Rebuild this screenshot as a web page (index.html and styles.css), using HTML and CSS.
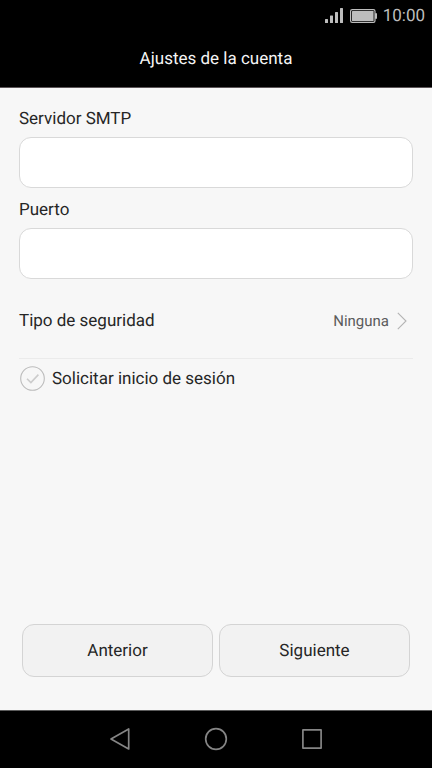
FILE: index.html
```html
<!DOCTYPE html>
<html lang="es">
<head>
    <meta charset="UTF-8">
    <meta name="viewport" content="width=device-width, initial-scale=1.0">
    <title>Ajustes de la cuenta</title>
    <link rel="stylesheet" href="styles.css">
</head>
<body>
    <div class="status-bar">
        <svg class="signal" width="18" height="16" viewBox="0 0 18 16" fill="#bdbdbd">
            <rect x="0" y="11" width="3" height="4" rx="0.5"/>
            <rect x="5" y="7.5" width="3" height="7.5" rx="0.5"/>
            <rect x="10" y="4" width="3" height="11" rx="0.5"/>
            <rect x="15" y="0" width="3" height="15" rx="0.5"/>
        </svg>
        <svg class="battery" width="27" height="14" viewBox="0 0 27 14">
            <rect x="0.6" y="0.6" width="24.4" height="12.8" rx="1.6" fill="none" stroke="#bdbdbd" stroke-width="1.2"/>
            <rect x="2" y="2" width="21.6" height="10" rx="0.5" fill="#bdbdbd"/>
            <rect x="25" y="4" width="2" height="6" rx="1" fill="#bdbdbd"/>
        </svg>
        <span class="clock">10:00</span>
    </div>
    <header class="header">
        <h1>Ajustes de la cuenta</h1>
    </header>

    <form class="settings">
        <div class="field">
            <label for="smtp-server">Servidor SMTP</label>
            <input type="text" id="smtp-server" name="server">
        </div>
        <div class="field">
            <label for="port">Puerto</label>
            <input type="text" id="port" name="port" inputmode="numeric">
        </div>
        <div class="security">
            <label for="security-type">Tipo de seguridad</label>
            <select id="security-type" name="security">
                <option>Ninguna</option>
                <option>SSL/TLS</option>
                <option>STARTTLS</option>
            </select>
            <svg class="chevron" width="10" height="18" viewBox="0 0 10 18" fill="none" stroke="#b4b4b4" stroke-width="1.1">
                <path d="M0.8 0.8 L9 9 L0.8 17.2"/>
            </svg>
        </div>
        <div class="login">
            <span class="check">
                <input type="checkbox" id="login-required" name="login">
                <svg width="25" height="25" viewBox="0 0 25 25" fill="none">
                    <circle cx="12.5" cy="12.5" r="11.8" stroke="#bcbcbc" stroke-width="1.1"/>
                    <path d="M7 12.8 L10.9 16.6 L18.4 8.6" stroke="#cccccc" stroke-width="1.6"/>
                </svg>
            </span>
            <label for="login-required">Solicitar inicio de sesión</label>
        </div>
        <div class="actions">
            <button type="button">Anterior</button>
            <button type="submit">Siguiente</button>
        </div>
    </form>

    <nav class="nav-bar">
        <button type="button" aria-label="Atrás">
            <svg width="24" height="24" viewBox="0 0 24 24" fill="none" stroke="#858585" stroke-width="1.7" stroke-linejoin="round">
                <path d="M20.7 2 V22 L3 12 Z"/>
            </svg>
        </button>
        <button type="button" aria-label="Inicio">
            <svg width="24" height="24" viewBox="0 0 24 24" fill="none" stroke="#858585" stroke-width="1.7">
                <circle cx="12" cy="12" r="10.3"/>
            </svg>
        </button>
        <button type="button" aria-label="Recientes">
            <svg width="24" height="24" viewBox="0 0 24 24" fill="none" stroke="#858585" stroke-width="1.7" stroke-linejoin="round">
                <rect x="2.9" y="2.9" width="18.2" height="18.2"/>
            </svg>
        </button>
    </nav>
</body>
</html>
```

FILE: styles.css
```css
* {
    box-sizing: border-box;
}
body {
    font-family: Roboto, sans-serif;
    font-size: 17px;
    line-height: 20px;
    color: #262626;
    background-color: #f7f7f7;
    text-rendering: geometricPrecision;
    display: flex;
    flex-direction: column;
    min-height: 100vh;
    margin: 0;
}
button, input, select {
    font: inherit;
    color: inherit;
    text-rendering: inherit;
}
.status-bar {
    display: flex;
    align-items: center;
    justify-content: flex-end;
    height: 32px;
    padding: 0 7px;
    background-color: #000;
    color: #bdbdbd;
}
.signal {
    margin-right: 7px;
}
.battery {
    margin-right: 6px;
}
.header {
    padding: 17px 20px 18px;
    background-color: #000;
    border-bottom: 1px solid #5c5558;
}
h1 {
    margin: 0;
    font-size: 17px;
    font-weight: 400;
    text-align: center;
    color: #f5f5f5;
}
.settings {
    flex: 1;
    display: flex;
    flex-direction: column;
    padding: 21px 19px 33px;
}
.field {
    display: flex;
    flex-direction: column;
    gap: 8px;
    margin-bottom: 12px;
}
.field input {
    width: 100%;
    height: 51px;
    padding: 0 14px;
    background-color: #fff;
    border: 1px solid #d9d9d9;
    border-radius: 12px;
}
.security {
    display: flex;
    align-items: center;
    padding: 20px 6px 27px 0;
    border-bottom: 1px solid #ebebeb;
}
.security label {
    flex: 1;
}
.security select {
    appearance: none;
    padding: 0;
    border: none;
    background: none;
    font-size: 15px;
    color: #5c5c5c;
    text-align: right;
    text-align-last: right;
}
.chevron {
    margin-left: 8px;
}
.login {
    display: flex;
    align-items: center;
    gap: 7px;
    padding: 7px 1px;
}
.check {
    display: grid;
}
.check input, .check svg {
    grid-area: 1 / 1;
}
.check input {
    appearance: none;
    width: 25px;
    height: 25px;
    margin: 0;
}
.check svg {
    pointer-events: none;
}
.check input:checked + svg * {
    stroke: #1a9c8c;
}
.actions {
    display: flex;
    gap: 6px;
    margin-top: auto;
    padding: 0 3px;
}
.actions button {
    flex: 1;
    height: 53px;
    background-color: #f2f2f2;
    border: 1px solid #d4d4d4;
    border-radius: 12px;
}
.nav-bar {
    display: flex;
    justify-content: center;
    gap: 72px;
    padding: 16px 0 17px;
    background-color: #000;
    border-top: 1px solid #5c5c5c;
}
.nav-bar button {
    display: flex;
    padding: 0;
    border: none;
    background: none;
}
```
